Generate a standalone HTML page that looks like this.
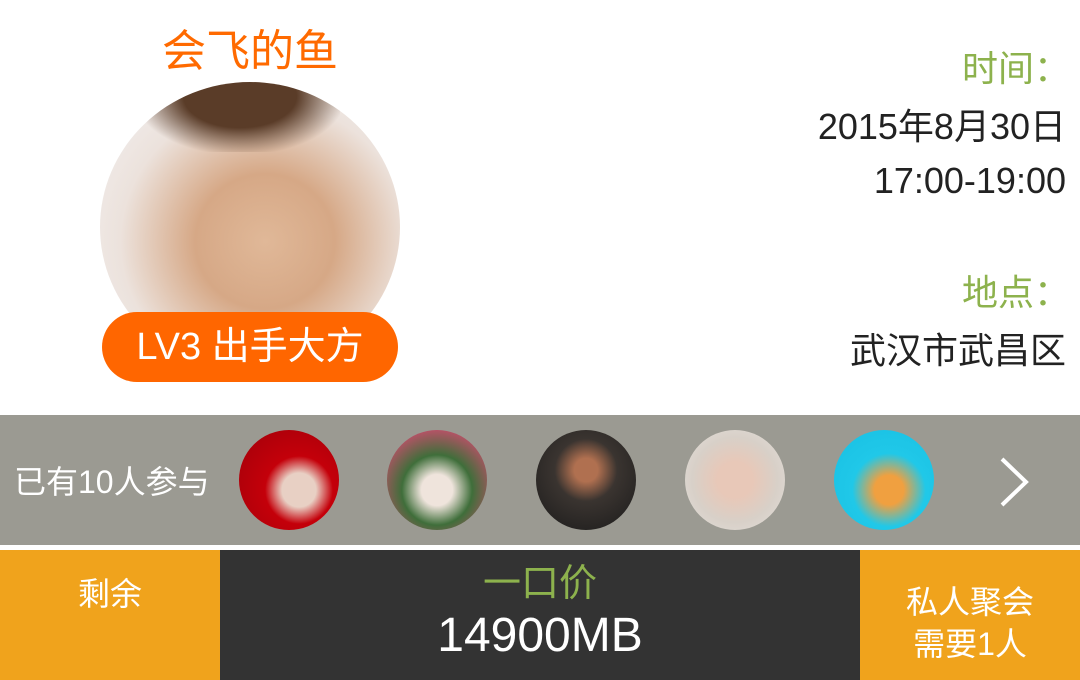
<!DOCTYPE html>
<html><head><meta charset="utf-8"><style>
body{margin:0;width:1080px;height:680px;background:#fff;position:relative;overflow:hidden;font-family:"Liberation Sans","Noto Sans CJK SC",sans-serif}
.a{position:absolute}
.c{position:absolute;width:100px;height:100px;border-radius:50%;top:430px}
</style></head><body>
<div class="a" style="left:90px;top:26px;width:320px;text-align:center;font-size:44px;color:#ff6a00;line-height:52px">会飞的鱼</div>
<div class="a" style="left:100px;top:82px;width:300px;height:290px;border-radius:50%;overflow:hidden;background:radial-gradient(ellipse at 55% 55%,#e0b898 0%,#d6a886 30%,#ece2dc 62%,#f4f4f6 100%)">
<div class="a" style="left:40px;top:-10px;width:200px;height:80px;background:radial-gradient(ellipse at 50% 30%,#5a3c28 0 40%,rgba(120,90,70,0) 75%)"></div>
</div>
<div class="a" style="left:102px;top:312px;width:296px;height:70px;border-radius:35px;background:#ff6600;color:#fff;font-size:38px;line-height:70px;text-align:center">LV3 出手大方</div>
<div class="a" style="right:10px;top:46px;font-size:36px;color:#8db24d;text-align:right;line-height:46px">时间：</div>
<div class="a" style="right:14px;top:104px;font-size:36px;color:#222;text-align:right;line-height:46px">2015年8月30日</div>
<div class="a" style="right:14px;top:158px;font-size:36px;color:#222;text-align:right;line-height:46px">17:00-19:00</div>
<div class="a" style="right:10px;top:270px;font-size:36px;color:#8db24d;text-align:right;line-height:46px">地点：</div>
<div class="a" style="right:14px;top:328px;font-size:36px;color:#222;text-align:right;line-height:46px">武汉市武昌区</div>
<div class="a" style="left:0;top:415px;width:1080px;height:130px;background:#9b9a92"></div>
<div class="a" style="left:14px;top:462px;font-size:32px;color:#fff;line-height:40px">已有10人参与</div>
<div class="c" style="left:239px;background:radial-gradient(circle at 60% 60%,#e8d0c4 0 20%,#c4000a 40%,#a0000a)"></div>
<div class="c" style="left:387px;background:radial-gradient(circle at 50% 60%,#efe4dc 0 20%,#3f6e3a 45%,#c0506a 80%)"></div>
<div class="c" style="left:536px;background:radial-gradient(circle at 50% 40%,#b07050 0 15%,#3a3430 40%,#1a1a1a)"></div>
<div class="c" style="left:685px;background:radial-gradient(circle at 50% 50%,#e8c8b8 0 25%,#d8d0c8 60%,#e4e0dc)"></div>
<div class="c" style="left:834px;background:radial-gradient(circle at 55% 60%,#f0a040 0 18%,#20c8e8 45%,#18c0e4)"></div>
<svg class="a" style="left:996px;top:455px" width="40" height="55"><path d="M6 4 L30 27 L6 50" fill="none" stroke="#fff" stroke-width="4"/></svg>
<div class="a" style="left:0;top:550px;width:220px;height:130px;background:#f0a31c;color:#fff;font-size:32px;text-align:center;line-height:40px;padding-top:24px;box-sizing:border-box">剩余</div>
<div class="a" style="left:220px;top:550px;width:640px;height:130px;background:#333"></div>
<div class="a" style="left:220px;top:561px;width:640px;text-align:center;font-size:38px;color:#8db24d;line-height:46px">一口价</div>
<div class="a" style="left:220px;top:608px;width:640px;text-align:center;font-size:48px;color:#fff;line-height:56px">14900MB</div>
<div class="a" style="left:860px;top:550px;width:220px;height:130px;background:#f0a31c;color:#fff;font-size:32px;text-align:center;line-height:42px;padding-top:31px;box-sizing:border-box">私人聚会<br>需要1人</div>
</body></html>
